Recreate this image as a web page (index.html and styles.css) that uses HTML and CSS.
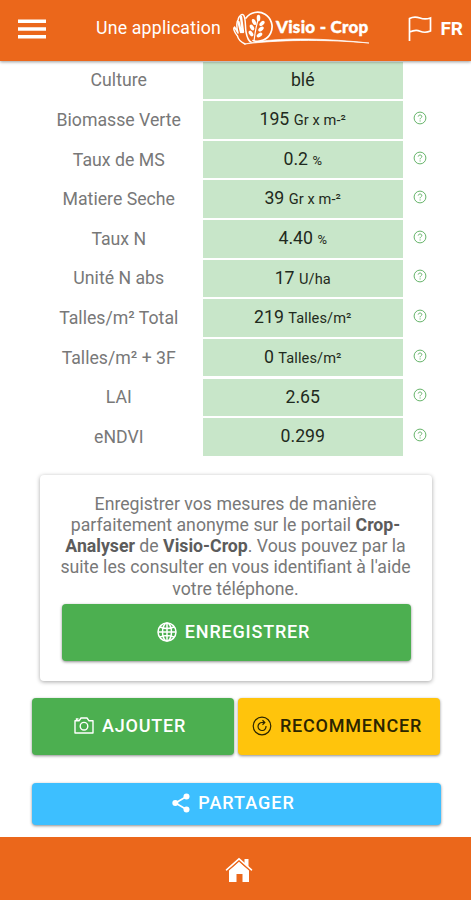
FILE: index.html
```html
<!DOCTYPE html>
<html lang="fr">
<head>
<meta charset="utf-8">
<title>Visio-Crop</title>
<link rel="stylesheet" href="styles.css">
</head>
<body>
<svg class="defs" width="0" height="0">
  <symbol id="help" viewBox="0 0 14 14">
    <circle cx="7" cy="7" r="5.9" fill="none" stroke="currentColor" stroke-width="1"/>
    <path d="M5.2 5.6C5.3 3.4 8.9 3.5 8.8 5.6C8.7 6.8 7.1 6.9 7.1 8.3M7.1 9.4V10.5" fill="none" stroke="currentColor" stroke-width="1"/>
  </symbol>
</svg>
<header class="topbar">
  <svg class="menu" viewBox="0 0 29 20"><path d="M0 2H29M0 10H29M0 18H29" stroke="#fff" stroke-width="3.6"/></svg>
  <span class="tagline">Une application</span>
  <div class="brand">
    <svg class="logo" viewBox="0 0 138 38">
      <g fill="none" stroke="#fff" stroke-linecap="round" stroke-linejoin="round">
        <path d="M13 8A14.500 14.500 0 1 1 20 30.500" stroke-width="1.700"/>
        <path d="M12 34C8 32 5 29 4.500 26C1 22 0 18 1.500 17L5 23C3 16 4 11 5 10C6 5 9 4 10.500 5C13 8 12 16 13 22C14 27 15 31 18 32" stroke-width="1.500"/>
        <path d="M5.500 12L8 22M8 7L10 22" stroke-width="2.400"/>
        <path d="M12 34C38 28 79 27 136 33C87 29 44 30 12 34Z" fill="#fff" stroke-width=".7"/>
        <path d="M21 31C22 23 23 15 25.500 9" stroke-width="1.200"/>
      </g>
      <g fill="#fff">
        <ellipse cx="25.500" cy="8" rx="1.800" ry="3.200"/>
        <ellipse cx="21" cy="12" rx="1.800" ry="3.200" transform="rotate(-25 21 12)"/>
        <ellipse cx="29" cy="13.500" rx="1.800" ry="3.200" transform="rotate(45 29 13.500)"/>
        <ellipse cx="19" cy="17.500" rx="1.800" ry="3.200" transform="rotate(-30 19 17.500)"/>
        <ellipse cx="28" cy="19" rx="1.800" ry="3.200" transform="rotate(50 28 19)"/>
        <ellipse cx="18" cy="23.500" rx="1.800" ry="3.200" transform="rotate(-35 18 23.500)"/>
        <ellipse cx="26.500" cy="25" rx="1.800" ry="3.200" transform="rotate(55 26.500 25)"/>
      </g>
    </svg>
    <span class="wordmark">Visio - Crop</span>
  </div>
  <div class="lang">
    <svg class="flag" viewBox="0 0 24 27"><path d="M1.500 26V3.500C5 1.500 8 1.500 12 3S19 4.200 22.500 3V16C19 17.500 15 17.500 12 16.200S5 15.500 1.500 17" fill="none" stroke="#fff" stroke-width="1.700"/></svg>
    <span>FR</span>
  </div>
</header>
<main class="content">
  <div class="table">
    <div class="row"><span class="label">Culture</span><span class="value">blé</span></div>
    <div class="row"><span class="label">Biomasse Verte</span><span class="value">195 <small>Gr x m-²</small></span><svg class="help"><use href="#help"/></svg></div>
    <div class="row"><span class="label">Taux de MS</span><span class="value">0.2 <small class="pct">%</small></span><svg class="help"><use href="#help"/></svg></div>
    <div class="row"><span class="label">Matiere Seche</span><span class="value">39 <small>Gr x m-²</small></span><svg class="help"><use href="#help"/></svg></div>
    <div class="row"><span class="label">Taux N</span><span class="value">4.40 <small class="pct">%</small></span><svg class="help"><use href="#help"/></svg></div>
    <div class="row"><span class="label">Unité N abs</span><span class="value">17 <small>U/ha</small></span><svg class="help"><use href="#help"/></svg></div>
    <div class="row"><span class="label">Talles/m² Total</span><span class="value">219 <small>Talles/m²</small></span><svg class="help"><use href="#help"/></svg></div>
    <div class="row"><span class="label">Talles/m² + 3F</span><span class="value">0 <small>Talles/m²</small></span><svg class="help"><use href="#help"/></svg></div>
    <div class="row"><span class="label">LAI</span><span class="value">2.65</span><svg class="help"><use href="#help"/></svg></div>
    <div class="row"><span class="label">eNDVI</span><span class="value">0.299</span><svg class="help"><use href="#help"/></svg></div>
  </div>
  <section class="card">
    <p>Enregistrer vos mesures de manière<br>parfaitement anonyme sur le portail <b>Crop-</b><br><b>Analyser</b> de <b>Visio-Crop</b>. Vous pouvez par la<br>suite les consulter en vous identifiant à l'aide<br>votre téléphone.</p>
    <button class="btn green save">
      <svg width="20" height="20" viewBox="0 0 20 20" fill="none" stroke="#fff" stroke-width="1.500"><circle cx="10" cy="10" r="9"/><ellipse cx="10" cy="10" rx="4.500" ry="9"/><path d="M10 1V19M1 10H19M3 5Q10 8 17 5M3 15Q10 12 17 15"/></svg>
      <span>ENREGISTRER</span>
    </button>
  </section>
  <div class="actions">
    <button class="btn green add">
      <svg width="20" height="17" viewBox="0 0 20 17" fill="none" stroke="#fff" stroke-width="1.400"><path d="M1 3.800H5L7 1H13L15 3.800H19V16H1Z" stroke-linejoin="round"/><circle cx="10" cy="9.200" r="3.800"/><path d="M2.500 3.500V2H4.500"/></svg>
      <span>AJOUTER</span>
    </button>
    <button class="btn yellow restart">
      <svg width="20" height="20" viewBox="0 0 20 20" fill="none" stroke="#2b2500" stroke-width="1.200"><circle cx="10" cy="10" r="8.800"/><path d="M14 10A4 4 0 1 1 10 6.500H12M10.500 4.300L12.800 6.500L10.500 8.700"/></svg>
      <span>RECOMMENCER</span>
    </button>
  </div>
  <button class="btn blue share">
    <svg width="18" height="20" viewBox="0 0 18 20" fill="#fff"><path d="M14.500 3.500L3.500 10L14.500 16.500" fill="none" stroke="#fff" stroke-width="1.700"/><circle cx="14.500" cy="3.500" r="3"/><circle cx="3.300" cy="10" r="3"/><circle cx="14.500" cy="16.500" r="3"/></svg>
    <span>PARTAGER</span>
  </button>
</main>
<footer class="bottombar">
  <svg width="28" height="26" viewBox="0 0 28 26" fill="#fff"><path d="M14 4.800L24 13.500V25H17.500V17H11.500V25H4V13.500Z"/><path d="M19.500 2H23.500V10L19.500 6.500Z"/><path d="M1.500 12.800L14 1.800L26.500 12.800" fill="none" stroke="#fff" stroke-width="1.600" stroke-linecap="round"/><path d="M3.200 13.500L14 4L24.800 13.500" fill="none" stroke="#eb671b" stroke-width=".7"/></svg>
</footer>
</body>
</html>
```
FILE: styles.css
```css
* { box-sizing: border-box; }
body {
  margin: 0;
  width: 471px;
  height: 900px;
  display: flex;
  flex-direction: column;
  overflow: hidden;
  background: #fff;
  color: #787878;
  font-family: Roboto, sans-serif;
  font-size: 17.700px;
}
.defs { display: none; }
.topbar {
  flex: none;
  height: 61px;
  display: flex;
  align-items: center;
  background: #eb671b;
  color: #fff;
  padding: 0 8px 5px 18px;
  box-shadow: 0 1px 3px rgba(0, 0, 0, .4);
  z-index: 1;
}
.menu { width: 28px; height: 20px; margin-top: 2px; }
.tagline { width: 126px; margin: -1px 0 0 50px; white-space: nowrap; letter-spacing: .2px; }
.brand {
  width: 138px;
  height: 38px;
  margin: 1px 0 0 11px;
  display: grid;
}
.logo, .wordmark { grid-area: 1 / 1; }
.logo { width: 138px; height: 38px; }
.wordmark {
  padding: 7px 0 0 43px;
  font: 900 17px/20px Lato, sans-serif;
  white-space: nowrap;
  letter-spacing: .25px;
  -webkit-text-stroke: .4px #fff;
}
.lang {
  margin-left: auto;
  display: flex;
  align-items: center;
  gap: 8px;
  font-weight: 700;
  font-size: 19px;
}
.flag { width: 24px; height: 27px; }
.content { flex: 1; display: flex; flex-direction: column; }
.table { display: grid; row-gap: 2.270px; padding-top: .5px; }
.row {
  height: 37.400px;
  display: grid;
  grid-template-columns: 167.500px 200.500px 34px;
  grid-template-rows: 37.400px;
  padding-left: 35px;
  align-items: center;
}
.label { text-align: center; }
.value {
  height: 37.400px;
  text-align: center;
  background: #c8e6c9;
  color: #1f2a20;
  line-height: 37px;
  overflow: hidden;
}
.value small { font-size: 14.600px; line-height: 1; letter-spacing: .1px; }
.value .pct { font-size: 13px; }
.help { width: 14px; height: 14px; margin: -4px auto 0; color: #66b46a; }
.card {
  width: 392px;
  height: 206px;
  margin: 19px 0 0 40px;
  padding: 19px 21px 20px 22px;
  border-radius: 4px;
  background: #fff;
  box-shadow: 0 1px 4px rgba(0, 0, 0, .35);
}
.card p {
  margin: 0 -9px 4px -11px;
  text-align: center;
  line-height: 21.200px;
  white-space: nowrap;
}
.card b { font-weight: 700; color: #5c5c5c; }
.btn {
  display: flex;
  align-items: center;
  justify-content: center;
  gap: 8px;
  padding: 0 0 1px;
  border: 0;
  border-radius: 4px;
  color: #fff;
  font: 500 18px Roboto, sans-serif;
  letter-spacing: .800px;
  box-shadow: 0 1px 3px rgba(0, 0, 0, .45);
}
.green { background: #4caf50; }
.yellow { background: #ffc40c; color: #2b2500; }
.blue { background: #3dbfff; }
.btn span { margin-top: -1px; }
.save { width: 349px; height: 57px; padding-right: 6px; }
.actions { display: flex; gap: 4px; margin: 17px 0 0 32px; }
.actions .btn { width: 202px; height: 57px; }
.add { padding-right: 6px; }
.restart { padding-right: 4px; }
.share { width: 409px; height: 42px; margin: 28px 0 0 32px; padding-right: 6px; letter-spacing: 1px; }
.bottombar {
  flex: none;
  height: 63px;
  display: flex;
  justify-content: center;
  padding: 20px 0 0 7px;
  background: #eb671b;
}
```
